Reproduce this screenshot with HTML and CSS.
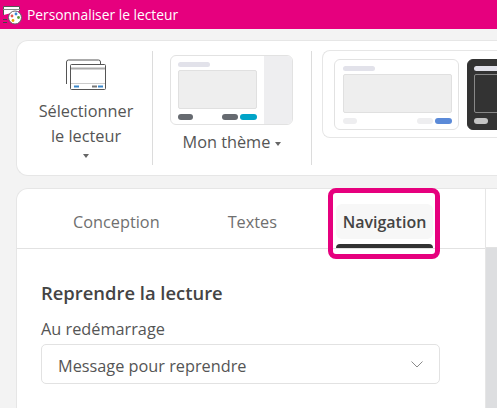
FILE: index.html
```html
<!DOCTYPE html>
<html lang="fr">
<head>
    <meta charset="UTF-8">
    <title>Personnaliser le lecteur</title>
    <link rel="stylesheet" href="styles.css">
</head>
<body>
    <!-- Title bar -->
    <div class="title-bar">
        <svg class="app-icon" width="22" height="22" viewBox="0 0 22 22">
            <path d="M1.500 11V2.500h16V7" fill="#fff" stroke="#555" stroke-width="1"/>
            <path d="M1 5.500h17" stroke="#888" stroke-width="1"/>
            <path d="M1 15.500h4M1 18.500h4" stroke="#444" stroke-width="1"/>
            <circle cx="13" cy="13.500" r="6.500" fill="#fff" stroke="#666" stroke-width="1"/>
            <circle cx="10" cy="12" r="1.400" fill="#e2574c"/>
            <circle cx="14" cy="10" r="1.400" fill="#3c8bd9"/>
            <circle cx="16.500" cy="13.500" r="1.400" fill="#5a9e3a"/>
            <circle cx="11" cy="16.500" r="1.400" fill="#e6a700"/>
        </svg>
        <span>Personnaliser le lecteur</span>
    </div>

    <!-- Ribbon -->
    <div class="ribbon">
        <div class="select-player">
            <svg width="42" height="32" viewBox="0 0 42 32">
                <path d="M1.500 25V3a2 2 0 0 1 2-2h30a2 2 0 0 1 2 2v2" fill="none" stroke="#555" stroke-width="1"/>
                <rect x="5.500" y="5.500" width="35" height="25" rx="1" fill="#fff" stroke="#555" stroke-width="1"/>
                <path d="M6 9.500h34" stroke="#aaa" stroke-width="2"/>
                <path d="M6 24.500h34" stroke="#ccc" stroke-width="1"/>
                <path d="M9 27.500h5M33 27.500h5" stroke="#3a86c8" stroke-width="2"/>
                <path d="M27 27.500h5" stroke="#777" stroke-width="2"/>
            </svg>
            <div class="select-label">Sélectionner<br>le lecteur</div>
            <span class="caret"></span>
        </div>

        <div class="my-theme">
            <div class="thumb thumb-mine">
                <div class="thumb-main">
                    <div class="thumb-title"></div>
                    <div class="thumb-screen"></div>
                    <div class="thumb-btns">
                        <i class="pill pill-gray"></i>
                        <i class="spacer"></i>
                        <i class="pill pill-gray"></i>
                        <i class="pill pill-teal"></i>
                    </div>
                </div>
                <div class="thumb-side"></div>
            </div>
            <div class="my-theme-label">Mon thème <span class="caret"></span></div>
        </div>

        <div class="gallery">
            <div class="thumb thumb-light">
                <div class="thumb-title"></div>
                <div class="thumb-screen"></div>
                <div class="thumb-btns">
                    <i class="pill pill-pale"></i>
                    <i class="spacer"></i>
                    <i class="pill pill-pale"></i>
                    <i class="pill pill-blue"></i>
                </div>
            </div>
            <div class="thumb thumb-dark">
                <div class="thumb-title"></div>
                <div class="thumb-screen"></div>
                <div class="thumb-btns">
                    <i class="pill pill-silver"></i>
                </div>
            </div>
        </div>
    </div>

    <!-- Settings panel -->
    <div class="workspace">
        <div class="panel">
            <div class="tabs">
                <div class="tab">Conception</div>
                <div class="tab">Textes</div>
                <div class="tab tab-active">Navigation</div>
                <div class="tab-highlight"></div>
            </div>
            <div class="panel-body">
                <h3>Reprendre la lecture</h3>
                <label>Au redémarrage</label>
                <div class="select-box">
                    <span>Message pour reprendre</span>
                    <svg width="12" height="7" viewBox="0 0 12 7"><path d="M.5.500 6 6l5.500-5.500" fill="none" stroke="#8a8a8a" stroke-width="1"/></svg>
                </div>
            </div>
        </div>
        <div class="stage">
            <div class="stage-top"></div>
        </div>
    </div>
</body>
</html>
```

FILE: styles.css
```css
* {
    margin: 0;
    padding: 0;
    box-sizing: border-box;
    font-family: 'Open Sans', 'Noto Sans', sans-serif;
}

html, body {
    height: 408px;
    overflow: hidden;
}

body {
    background: #f3f3f3;
    color: #4a4a4a;
    font-size: 16.3px;
}

/* Title bar */
.title-bar {
    height: 29px;
    background: #e6007e;
    color: #fff;
    display: flex;
    align-items: center;
    gap: 3px;
    padding-left: 2px;
    font-size: 13.8px;
}

/* Ribbon */
.ribbon {
    height: 136px;
    margin: 11px 0 0 16px;
    background: #fff;
    border: 1px solid #e6e6e6;
    border-right: none;
    border-radius: 12px 0 0 12px;
    display: flex;
}

.select-player {
    width: 136px;
    margin-top: 10px;
    height: 114px;
    padding: 8px 0 0 3px;
    border-right: 1px solid #dcdcdc;
    display: flex;
    flex-direction: column;
    align-items: center;
    color: #555;
}

.select-label {
    margin-top: 8px;
    text-align: center;
    line-height: 25px;
}

.caret {
    display: inline-block;
    border: 3.5px solid transparent;
    border-top: 4px solid #666;
    border-bottom: none;
    margin-top: 5px;
    vertical-align: middle;
}

.my-theme {
    width: 159px;
    margin-top: 10px;
    height: 114px;
    padding: 4px 0 0 17px;
    border-right: 1px solid #dcdcdc;
}

.my-theme-label {
    margin-top: 5px;
    width: 123px;
    text-align: center;
    line-height: 24px;
    color: #555;
    white-space: nowrap;
}

.my-theme-label .caret {
    margin-top: 0;
}

.gallery {
    flex: 1;
    margin: 9px 0 0 10px;
    height: 88px;
    padding: 8px 0 0 11px;
    border: 1px solid #e6e6e6;
    border-right: none;
    border-radius: 8px 0 0 8px;
    display: flex;
    gap: 8px;
    overflow: hidden;
}

/* Theme thumbnails */
.thumb {
    flex: none;
    border: 1px solid #e2e2e2;
    border-radius: 6px;
    background: #fff;
}

.thumb-mine {
    width: 123px;
    height: 70px;
    display: flex;
    overflow: hidden;
}

.thumb-main {
    width: 93px;
    padding: 6px 7px 0 7px;
}

.thumb-side {
    flex: 1;
    background: #eeeef0;
}

.thumb-light {
    width: 125px;
    height: 71px;
    padding: 6px 6px 0 8px;
}

.thumb-dark {
    width: 125px;
    height: 71px;
    padding: 6px 6px 0 6px;
    background: #333;
    border-color: #333;
}

.thumb-title {
    width: 32px;
    height: 5px;
    border-radius: 3px;
    background: #e2e2ea;
}

.thumb-screen {
    height: 39px;
    margin-top: 3px;
    background: #eeeeee;
    border: 1px solid #e0e0e0;
    border-radius: 2px;
}

.thumb-dark .thumb-screen {
    background: #333;
    border-color: #888;
}

.thumb-btns {
    display: flex;
    gap: 2px;
    margin-top: 5px;
}

.spacer {
    flex: 1;
}

.pill {
    display: block;
    width: 14px;
    height: 6px;
    border-radius: 3px;
}

.pill-gray {
    width: 15px;
    background: #666a70;
}

.pill-gray:nth-child(3) {
    width: 16px;
}

.pill-teal {
    width: 17px;
    background: #00a4c8;
}

.pill-pale {
    width: 14px;
    background: #eeeef0;
}

.pill-pale:nth-child(3) {
    width: 16px;
}

.pill-blue {
    width: 17px;
    background: #5b8ad8;
}

.pill-silver {
    background: #c4c4c4;
}

/* Settings panel */
.workspace {
    display: flex;
    margin: 12px 0 0 16px;
}

.panel {
    width: 470px;
    height: 220px;
    background: #fff;
    border: 1px solid #e6e6e6;
    border-bottom: none;
    border-radius: 12px 0 0 0;
}

.tabs {
    position: relative;
    height: 60px;
    border-bottom: 1px solid #e2e2e2;
    display: flex;
    padding-left: 56px;
}

.tab {
    padding-top: 21px;
    color: #6f6f6f;
    margin-right: 68px;
    line-height: 24px;
}

.tab:nth-child(2) {
    margin-right: 59px;
}

.tab-active {
    position: relative;
    margin: 15px 0 0 0;
    width: 97px;
    height: 35px;
    padding-top: 6px;
    background: #f7f7f7;
    border-radius: 6px;
    color: #444;
    font-size: 16px;
    font-weight: 600;
    text-align: center;
    white-space: nowrap;
}

.tab-active::after {
    content: "";
    position: absolute;
    left: 0;
    right: 0;
    bottom: -9px;
    height: 4px;
    background: #333;
    border-radius: 4px 4px 0 0;
}

/* Pink callout over the active tab */
.tab-highlight {
    position: absolute;
    left: 311px;
    top: -1px;
    width: 112px;
    height: 71px;
    border: 5px solid #e6007e;
    border-radius: 8px;
}

.panel-body {
    padding: 33px 0 0 24px;
}

.panel-body h3 {
    font-size: 18.4px;
    font-weight: 600;
    line-height: 22px;
    color: #444;
}

.panel-body label {
    display: block;
    margin-top: 15px;
    line-height: 20px;
    color: #555;
}

.select-box {
    width: 399px;
    height: 40px;
    margin-top: 5px;
    padding: 0 16px;
    border: 1px solid #e2e2e2;
    border-radius: 5px;
    display: flex;
    align-items: center;
    justify-content: space-between;
    color: #555;
}

.select-box span {
    padding-top: 4px;
}

.stage {
    flex: 1;
    height: 220px;
    background: #dddee0;
}

.stage-top {
    height: 60px;
    background: #fff;
    border-bottom: 1px solid #e2e2e2;
    border-top: 1px solid #e6e6e6;
}
```
